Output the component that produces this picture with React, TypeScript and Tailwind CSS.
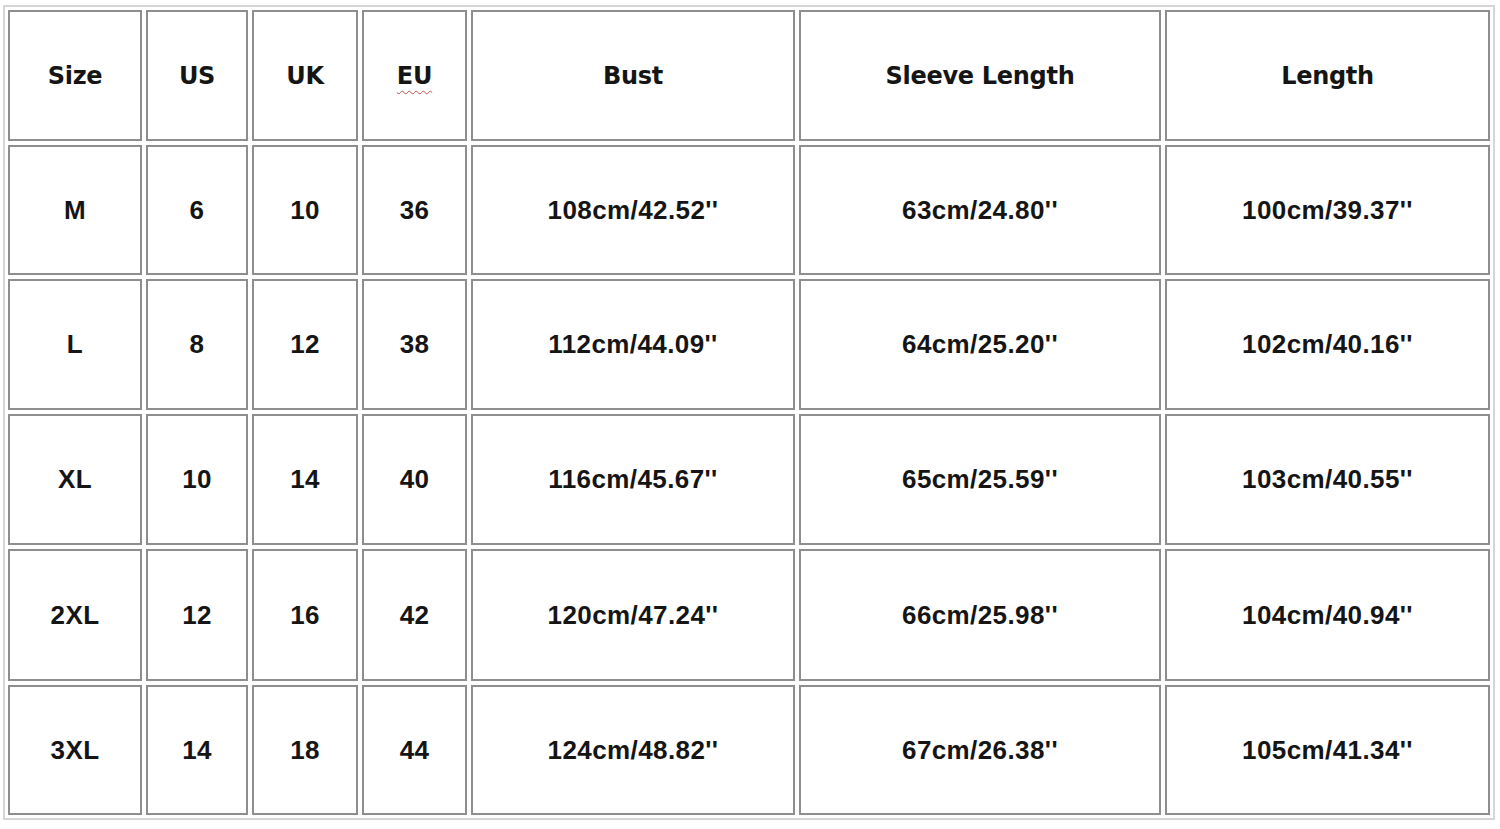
const headers = ['Size', 'US', 'UK', 'EU', 'Bust', 'Sleeve Length', 'Length']

const rows = [
  ['M', '6', '10', '36', "108cm/42.52''", "63cm/24.80''", "100cm/39.37''"],
  ['L', '8', '12', '38', "112cm/44.09''", "64cm/25.20''", "102cm/40.16''"],
  ['XL', '10', '14', '40', "116cm/45.67''", "65cm/25.59''", "103cm/40.55''"],
  ['2XL', '12', '16', '42', "120cm/47.24''", "66cm/25.98''", "104cm/40.94''"],
  ['3XL', '14', '18', '44', "124cm/48.82''", "67cm/26.38''", "105cm/41.34''"],
]

export default function App() {
  return (
    <div className="w-[1500px] h-[829px] bg-white pl-[3px] pt-[5px]">
      <div className="inline-grid grid-cols-[134px_102px_106px_105px_324px_362px_325px] grid-rows-[131px_130px_131px_131px_132px_130px] gap-x-[4px] gap-y-[4px] border-2 border-[#d6d6d6] p-[3px]">
        {headers.map((h) => (
          <div
            key={h}
            className="flex items-center justify-center border-2 border-[#8e8e8e] text-[24px] font-bold text-[#151515] font-['DejaVu_Sans',sans-serif] tracking-[-0.3px]"
          >
            {h === 'EU' ? (
              <span className="underline decoration-wavy decoration-[#c0504d] decoration-[1px] underline-offset-[6px]">EU</span>
            ) : (
              h
            )}
          </div>
        ))}
        {rows.map((r) =>
          r.map((c, i) => (
            <div
              key={r[0] + i}
              className="flex items-center justify-center border-2 border-[#8e8e8e] text-[26px] font-bold text-[#151515] font-['Liberation_Sans',Arial,sans-serif] tracking-[0.4px]"
            >
              {c}
            </div>
          ))
        )}
      </div>
    </div>
  )
}
